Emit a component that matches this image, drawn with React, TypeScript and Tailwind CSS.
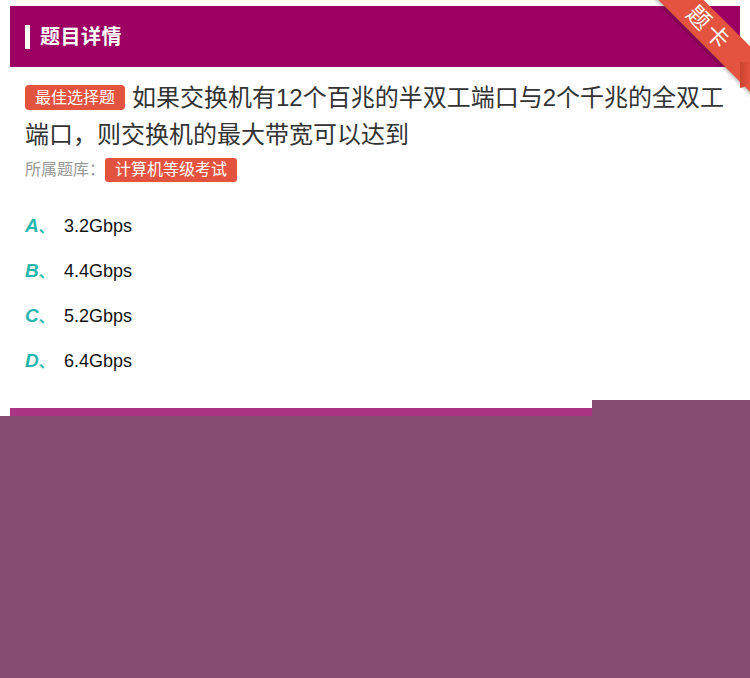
import React from 'react';

const options = [
  { key: 'A', text: '3.2Gbps' },
  { key: 'B', text: '4.4Gbps' },
  { key: 'C', text: '5.2Gbps' },
  { key: 'D', text: '6.4Gbps' },
];

const cjk = "font-['Helvetica','Liberation_Sans','Noto_Sans_CJK_SC',sans-serif]";

export default function App() {
  return (
    <div className={`relative w-[750px] h-[678px] overflow-hidden bg-white ${cjk}`}>
      <div className="pt-[6px] px-[10px]">
        {/* header */}
        <div className="h-[61px] bg-[#9b0062] flex items-center pl-[15px]">
          <span className="w-[5px] h-[24px] bg-white mr-[10px]" />
          <h2 className="text-white text-[20px] font-bold tracking-[0.5px]">题目详情</h2>
        </div>

        {/* question */}
        <div className="pl-[15px] pr-[5px] pt-[12px]">
          <p className="text-[24px] leading-[37px] text-[#333]">
            <span className="inline-block align-[3px] bg-[#e4533f] text-white text-[16px] leading-[25px] px-[10px] rounded-[4px] mr-[7px]">
              最佳选择题
            </span>
            如果交换机有12个百兆的半双工端口与2个千兆的全双工端口，则交换机的最大带宽可以达到
          </p>
          <div className="flex items-center mt-[5px] text-[16px] text-[#999]">
            <span>所属题库：</span>
            <span className="bg-[#e4533f] text-white leading-[24px] px-[10px] rounded-[3px]">计算机等级考试</span>
          </div>

          <ul className="mt-[32px] flex flex-col gap-[21px]">
            {options.map((o) => (
              <li key={o.key} className="flex items-center h-[24px]">
                <span className="w-[39px] text-[19px] font-bold italic text-[#27b6ad]">
                  {o.key}
                  <span className="not-italic text-[15px]">、</span>
                </span>
                <span className="text-[18px] text-[#111] font-['Liberation_Sans',sans-serif]">{o.text}</span>
              </li>
            ))}
          </ul>
        </div>
      </div>

      {/* bottom bar behind overlay */}
      <div className="absolute left-[10px] top-[408px] w-[582px] h-[10px] bg-[#ab3585]" />

      {/* corner ribbon */}
      <div className="absolute left-[634px] top-[17px] w-[160px] h-[32px] rotate-45 bg-[#e4533f] shadow-[0_2px_3px_rgba(0,0,0,0.25)] flex items-center justify-center">
        <span className="text-white text-[23px] leading-none tracking-[3px] ml-[-14px]">题卡</span>
      </div>
      <div className="absolute left-[740px] top-[62px] w-[10px] h-[26px] bg-gradient-to-r from-[#c9442f] to-[#e4533f] rounded-br-[10px]" />

      {/* overlay */}
      <div className="absolute left-[592px] right-0 top-[400px] h-[16px] bg-[#874c72]" />
      <div className="absolute left-0 right-0 top-[416px] bottom-0 bg-[#874c72]" />
    </div>
  );
}
